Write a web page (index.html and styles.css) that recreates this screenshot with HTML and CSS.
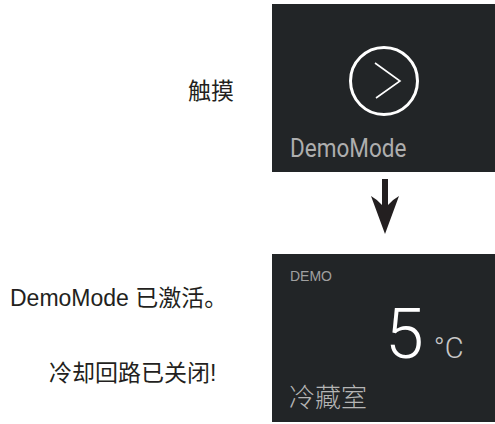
FILE: index.html
```html
<!DOCTYPE html>
<html lang="zh">
<head>
<meta charset="utf-8">
<link rel="stylesheet" href="styles.css">
</head>
<body>
<div class="page">
  <div class="row row-top">
    <div class="notes">
      <p class="note note-touch">触摸</p>
    </div>
    <div class="panel">
      <svg class="go-icon" width="76" height="76" viewBox="0 0 76 76">
        <circle cx="38" cy="38" r="33.5" fill="none" stroke="#ffffff" stroke-width="3"/>
        <polyline points="29,20 54,38 30,55" fill="none" stroke="#ffffff" stroke-width="1.6" stroke-linejoin="miter"/>
      </svg>
      <div class="demo-title"><span>DemoMode</span></div>
    </div>
  </div>
  <div class="row row-arrow">
    <div></div>
    <svg class="arrow" width="30" height="58" viewBox="0 0 30 58">
      <path d="M12 1 H18 V27 Q22 22 29 18 L15 56 L1 18 Q8 22 12 27 Z" fill="#231f20"/>
    </svg>
  </div>
  <div class="row row-bottom">
    <div class="notes">
      <p class="note note-active">DemoMode 已激活。</p>
      <p class="note note-off">冷却回路已关闭!</p>
    </div>
    <div class="panel">
      <div class="demo-tag">DEMO</div>
      <div class="temp">
        <span class="temp-value">5</span>
        <span class="temp-unit">°C</span>
      </div>
      <div class="zone">冷藏室</div>
    </div>
  </div>
</div>
</body>
</html>
```
FILE: styles.css
```css
html, body {
  margin: 0;
  padding: 0;
  background: #ffffff;
}
.page {
  width: 495px;
  height: 424px;
  overflow: hidden;
  font-family: "Liberation Sans", "Noto Sans CJK SC", sans-serif;
  color: #231f20;
}
.row {
  display: grid;
  grid-template-columns: 272px 223px;
}
.row-top {
  margin-top: 4px;
}
.panel {
  height: 168px;
  background: #222527;
  display: flex;
  flex-direction: column;
  align-items: flex-start;
}
.notes {
  display: flex;
  flex-direction: column;
  align-items: flex-start;
}
.note {
  margin: 0;
  font-size: 23px;
  line-height: 30px;
  white-space: nowrap;
}
.note-touch {
  margin-top: 72px;
  margin-left: 188px;
}
.note-active {
  margin-top: 29px;
  margin-left: 10px;
}
.note-off {
  margin-top: 45px;
  margin-left: 49px;
}
.go-icon {
  display: block;
  margin-top: 39px;
  margin-left: 74px;
}
.demo-title {
  margin-top: 17px;
  margin-left: 18px;
  font-family: Roboto, "Liberation Sans", sans-serif;
  font-size: 25px;
  line-height: 25px;
  color: #aeaeae;
  white-space: nowrap;
}
.demo-title span {
  display: inline-block;
  transform: scaleX(0.9);
  transform-origin: left center;
}
.row-arrow {
  height: 82px;
}
.arrow {
  display: block;
  margin-top: 6px;
  margin-left: 98px;
}
.demo-tag {
  margin-top: 15px;
  margin-left: 18px;
  font-size: 14px;
  line-height: 14px;
  color: #a0a0a0;
}
.temp {
  margin-top: 16px;
  margin-left: 113px;
  display: flex;
  align-items: baseline;
  font-family: Roboto, "Liberation Sans", sans-serif;
  font-weight: 300;
}
.temp-value {
  font-size: 70px;
  line-height: 70px;
  color: #ffffff;
}
.temp-unit {
  margin-left: 10px;
  font-size: 29px;
  line-height: 29px;
  color: #c8c8c8;
}
.zone {
  margin-top: 14px;
  margin-left: 17px;
  font-family: "Noto Sans CJK SC", sans-serif;
  font-weight: 300;
  font-size: 26px;
  line-height: 26px;
  color: #b5b5b5;
}
```
